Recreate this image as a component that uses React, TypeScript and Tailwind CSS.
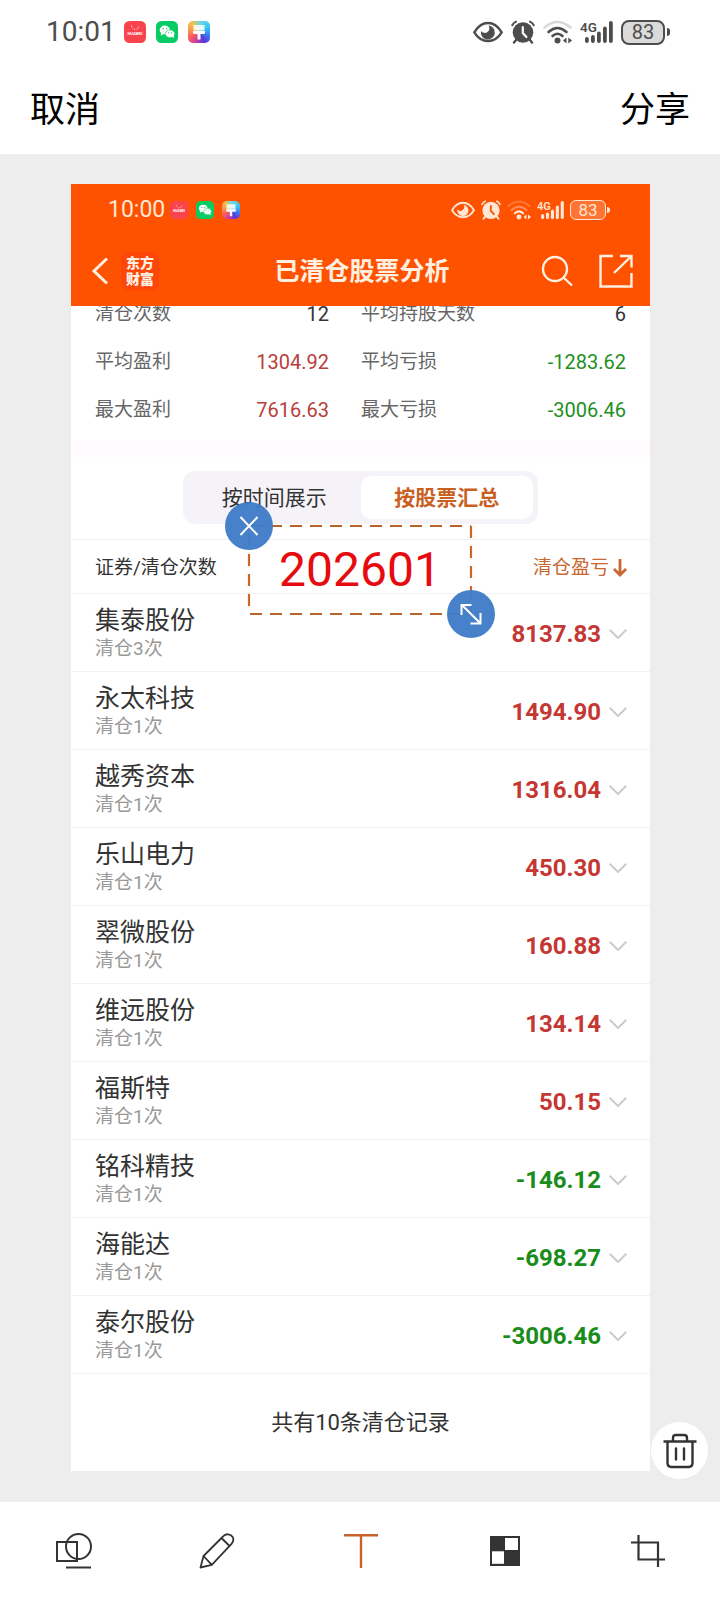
import React, { useState } from 'react';

interface Holding {
  name: string;
  count: number;
  profit: string;
}

const holdings: Holding[] = [
  { name: '集泰股份', count: 3, profit: '8137.83' },
  { name: '永太科技', count: 1, profit: '1494.90' },
  { name: '越秀资本', count: 1, profit: '1316.04' },
  { name: '乐山电力', count: 1, profit: '450.30' },
  { name: '翠微股份', count: 1, profit: '160.88' },
  { name: '维远股份', count: 1, profit: '134.14' },
  { name: '福斯特', count: 1, profit: '50.15' },
  { name: '铭科精技', count: 1, profit: '-146.12' },
  { name: '海能达', count: 1, profit: '-698.27' },
  { name: '泰尔股份', count: 1, profit: '-3006.46' }
];

const stats = [
  { label: '清仓次数', value: '12', color: 'text-[#333333]' },
  { label: '平均持股天数', value: '6', color: 'text-[#333333]' },
  { label: '平均盈利', value: '1304.92', color: 'text-[#b8403c]' },
  { label: '平均亏损', value: '-1283.62', color: 'text-[#238f23]' },
  { label: '最大盈利', value: '7616.63', color: 'text-[#b8403c]' },
  { label: '最大亏损', value: '-3006.46', color: 'text-[#238f23]' }
];

/* Status bar glyphs */
const EyeIcon = ({ className }: { className: string }) => (
  <svg viewBox="0 0 30 22" className={className} fill="none">
    <path d="M1.3 11.3C5 5 9.7 2 15 2s10 3 13.7 9.3C25 17.300 20.300 20 15 20S5 17.300 1.300 11.300Z" stroke="currentColor" strokeWidth="2.4" />
    <path d="M15.500 4.500A7 7 0 1 1 8 10A4 4 0 1 0 15.500 4.500Z" fill="currentColor" />
  </svg>
);

const AlarmIcon = ({ className, hand }: { className: string; hand: string }) => (
  <svg viewBox="0 0 24 24" className={className} fill="none" strokeLinecap="round">
    <circle cx="12" cy="12.5" r="10.3" fill="currentColor" />
    <path d="M1.2 5.2Q2.5 2.8 5 1.6M22.8 5.2Q21.5 2.8 19 1.6" stroke="currentColor" strokeWidth="2" />
    <path d="M5 20L3 22.5M19 20l2 2.5" stroke="currentColor" strokeWidth="2.4" />
    <path d="M11.8 7v6l3.6 4" stroke={hand} strokeWidth="2.2" />
  </svg>
);

const WifiIcon = ({ className, weak }: { className: string; weak: boolean }) => (
  <svg viewBox="0 0 29 24" className={className} fill="none" stroke="currentColor" strokeWidth="2.6" strokeLinecap="round">
    <path d="M1.5 7.500Q14.500-3.500 27.500 7.500" opacity="0.22" />
    <path d="M5.500 12Q14.500 4 23.500 12" opacity={weak ? 0.4 : 1} />
    <path d="M9.500 16Q14.500 11.500 19.500 16" />
    <circle cx="14.5" cy="20.5" r="3" fill="currentColor" stroke="none" />
    <path d="M20 20.500l3.500-3v6zM29 20.500l-3.700-3v6z" fill="currentColor" stroke="none" />
  </svg>
);

const SignalIcon = ({ className }: { className: string }) => (
  <svg viewBox="0 0 33 24" className={className} fill="currentColor">
    <text x="0" y="11.5" fontSize="13.5" fontWeight="600" className="font-['Roboto',sans-serif]">4G</text>
    <rect x="5" y="17" width="3.8" height="6" rx="1.9" />
    <rect x="11" y="15" width="3.8" height="8" rx="1.9" />
    <rect x="17" y="11.5" width="3.8" height="11.5" rx="1.9" />
    <rect x="23" y="6.5" width="3.8" height="16.5" rx="1.9" />
    <rect x="29" y="1" width="3.8" height="22" rx="1.9" />
  </svg>
);

const HuaweiIcon = ({ className }: { className: string }) => (
  <svg viewBox="0 0 22 22" className={className}>
    <rect width="22" height="22" rx="5.5" fill="#f8444c" />
    <path d="M7.5 4.500c.5 3 2 4 3.700 4s3.200-1 3.700-4" fill="none" stroke="#fff" strokeWidth="0.8" strokeDasharray="1.2 1.2" />
    <text x="11" y="14" textAnchor="middle" fontSize="4" fontWeight="700" fill="#fff" className="font-['Roboto',sans-serif]">HUAWEI</text>
  </svg>
);

const WechatIcon = ({ className }: { className: string }) => (
  <svg viewBox="0 0 22 22" className={className}>
    <rect width="22" height="22" rx="5.5" fill="#08cc63" />
    <ellipse cx="8.8" cy="9" rx="5.2" ry="4.4" fill="#fff" />
    <path d="M5.2 11.500l-.5 3 3-1.500z" fill="#fff" />
    <ellipse cx="14" cy="12.8" rx="4.7" ry="3.9" fill="#fff" stroke="#08cc63" strokeWidth="0.6" />
    <path d="M15.5 15.800l2.500 1.300-.4-2.600z" fill="#fff" />
    <g fill="#08cc63">
      <circle cx="7.2" cy="7.8" r="0.7" />
      <circle cx="10.6" cy="7.8" r="0.7" />
      <circle cx="12.5" cy="11.8" r="0.6" />
      <circle cx="15.6" cy="11.8" r="0.6" />
    </g>
  </svg>
);

const ThemeIcon = ({ className }: { className: string }) => (
  <div className={`${className} rounded-[5px] bg-[conic-gradient(from_0deg,#7fd4e8,#38c8f0_60deg,#3b7bf0_110deg,#5a35e0_150deg,#d0409a_200deg,#fb5a60_235deg,#f98a50_270deg,#f5c04c_320deg,#a8d08a_345deg,#7fd4e8)]`}>
    <svg viewBox="0 0 22 22" className="w-full" fill="#fff">
      <rect x="5.5" y="4" width="11" height="5.5" opacity="0.85" />
      <path d="M5 10h12v1.500q0 1.500-1.500 1.500H12.500v5.500h-3V13H6.500Q5 13 5 11.500z" />
    </svg>
  </div>
);

const ChevronDown = () => (
  <svg viewBox="0 0 18 10" className="h-[10px] w-[18px]" fill="none" stroke="#cccccc" strokeWidth="2">
    <path d="M.7.8L9 9l8.300-8.200" />
  </svg>
);

/* Status bar of the phone itself */
const PhoneStatus: React.FC = () => (
  <div className="flex h-16 items-center justify-between pr-[50px] pl-[46px] text-[#4d4d4d]">
    <div className="flex items-center gap-[10px]">
      <span className="mr-[-2px] text-[28px] leading-8">10:01</span>
      <HuaweiIcon className="size-[22px]" />
      <WechatIcon className="size-[22px]" />
      <ThemeIcon className="size-[22px]" />
    </div>
    <div className="flex items-center gap-2">
      <EyeIcon className="h-[22px] w-[30px]" />
      <AlarmIcon className="size-6" hand="#ffffff" />
      <WifiIcon className="h-6 w-[29px]" weak={false} />
      <SignalIcon className="h-6 w-[33px]" />
      <div className="flex items-center gap-[2px]">
        <div className="flex h-[25px] w-[44px] items-center justify-center rounded-[8px] border-2 border-current bg-[#dadada] text-xl leading-5">83</div>
        <div className="h-2 w-[3px] rounded-r-sm bg-current" />
      </div>
    </div>
  </div>
);

/* Status bar inside the screenshot being edited */
const ShotStatus: React.FC = () => (
  <div className="flex h-[52px] items-center justify-between pr-10 pl-[37px] text-[#ffe6d5]">
    <div className="flex items-center gap-2">
      <span className="mr-[-3px] text-[23px] leading-7">10:00</span>
      <HuaweiIcon className="size-[18px]" />
      <WechatIcon className="size-[18px]" />
      <ThemeIcon className="size-[18px]" />
    </div>
    <div className="flex items-center gap-[6px]">
      <EyeIcon className="h-[18px] w-6" />
      <AlarmIcon className="size-5" hand="#ff5200" />
      <WifiIcon className="h-5 w-6" weak />
      <SignalIcon className="h-5 w-[27px]" />
      <div className="flex items-center gap-[1px]">
        <div className="flex h-5 w-9 items-center justify-center rounded-[6px] border border-current bg-white/20 text-[17px] leading-4">83</div>
        <div className="h-[6px] w-[3px] rounded-r-sm bg-current" />
      </div>
    </div>
  </div>
);

/* Text sticker with its dashed frame and handles */
const TextSticker: React.FC = () => (
  <div className="absolute top-[342px] left-[178px] flex h-[88px] w-[222px] items-center justify-center">
    <svg className="absolute inset-0 h-full w-full overflow-visible" viewBox="0 0 222 88" stroke="#b8652c" strokeWidth="2.2" strokeDasharray="12 8" fill="none">
      <path d="M1 0H222M1 88H222" />
      <path d="M0 8V88M222 0V88" stroke="#cf632b" />
    </svg>
    <span className="text-[48px] leading-[56px] text-[#e60b0f]">202601</span>
    <button aria-label="关闭" className="absolute -top-6 -left-6 flex size-12 items-center justify-center rounded-full bg-[#3f7cc8]/96">
      <svg viewBox="0 0 20 20" className="size-5" stroke="#fff" strokeWidth="2">
        <path d="M1.500 1l17 18M18.500 1l-17 18" />
      </svg>
    </button>
    <button aria-label="缩放" className="absolute -right-6 -bottom-6 flex size-12 items-center justify-center rounded-full bg-[#3f7cc8]/96">
      <svg viewBox="0 0 22 22" className="size-[22px]" stroke="#fff" strokeWidth="2" fill="none">
        <path d="M1.500 12V2h10M2 2l18 18M20.500 10v10.500h-10" />
      </svg>
    </button>
  </div>
);

const Shot: React.FC = () => {
  const [tab, setTab] = useState<'time' | 'stock'>('stock');

  const tabClass = (active: boolean) =>
    active ? 'rounded-[10px] bg-white font-bold text-[#c8601f]' : 'text-[#333333]';

  return (
    <div className="relative bg-white">
      <div className="bg-[#ff5200] text-[#fff0e2]">
        <ShotStatus />
        <div className="grid h-[70px] grid-cols-[1fr_auto_1fr] items-center pr-[17px] pl-5">
          <div className="flex items-center gap-3">
            <button aria-label="返回">
              <svg viewBox="0 0 18 28" className="h-7 w-[18px]" fill="none" stroke="currentColor" strokeWidth="3">
                <path d="M16 1.500L3 14l13 12.500" />
              </svg>
            </button>
            <div className="flex size-[38px] flex-col items-center justify-center rounded-[8px] bg-[#fd4708] text-[14px] leading-4 font-black">
              <span>东方</span>
              <span>财富</span>
            </div>
          </div>
          <h1 className="pt-[2px] text-[25px] leading-8 font-bold">已清仓股票分析</h1>
          <div className="flex items-center justify-end gap-[26px]">
            <button aria-label="搜索">
              <svg viewBox="0 0 32 32" className="size-8" fill="none" stroke="currentColor" strokeWidth="2.4">
                <circle cx="14" cy="14" r="12" />
                <path d="M22.500 22.500l8.500 8" />
              </svg>
            </button>
            <button aria-label="分享截图">
              <svg viewBox="0 0 34 34" className="size-[34px]" fill="none" stroke="currentColor" strokeWidth="2.4">
                <path d="M14 2H1.500v30.500h31V19M21 2h11.500v11.500M32 2.500L15 19" />
              </svg>
            </button>
          </div>
        </div>
      </div>

      {/* Summary, scrolled partly under the header */}
      <div className="overflow-hidden pb-[6px]">
        <dl className="-mt-4 grid grid-cols-[233fr_264fr] gap-x-8 px-6">
          {stats.map(s => (
            <div key={s.label} className="flex h-12 items-center justify-between">
              <dt className="text-[19px] leading-6 text-[#666666]">{s.label}</dt>
              <dd className={`text-xl leading-6 ${s.color}`}>{s.value}</dd>
            </div>
          ))}
        </dl>
      </div>
      <div className="h-[17px] bg-[#fffbff]" />

      <div className="px-[112px] pt-[14px] pb-[15px]">
        <div className="grid h-[53px] grid-cols-2 rounded-xl bg-[#f6f3f8] p-[5px] text-[21px] leading-6">
          <button onClick={() => setTab('time')} className={tabClass(tab === 'time')}>按时间展示</button>
          <button onClick={() => setTab('stock')} className={tabClass(tab === 'stock')}>按股票汇总</button>
        </div>
      </div>

      <table className="w-full border-collapse">
        <thead>
          <tr className="h-[54px] border-y border-[#f2f2f2] text-[19px] leading-6">
            <th className="pt-[2px] pl-6 text-left font-normal text-[#333333]">证券/清仓次数</th>
            <th className="pt-[2px] pr-[23px] font-normal text-[#c8672f]">
              <button className="ml-auto flex items-center gap-1">
                清仓盈亏
                <svg viewBox="0 0 14 20" className="h-5 w-[14px]" fill="none" stroke="currentColor" strokeWidth="2.8">
                  <path d="M7 1v16M1 11l6 6 6-6" />
                </svg>
              </button>
            </th>
          </tr>
        </thead>
        <tbody>
          {holdings.map(h => (
            <tr key={h.name} className="h-[78px] border-b border-[#f2f2f2]">
              <td className="pt-1 pl-6">
                <div className="text-[25px] leading-7 text-[#333333]">{h.name}</div>
                <div className="text-[19px] leading-7 text-[#999999]">清仓{h.count}次</div>
              </td>
              <td className="pt-[2px] pr-[23px]">
                <div className="flex items-center justify-end gap-2">
                  <span className={`text-2xl leading-7 font-bold ${h.profit.startsWith('-') ? 'text-[#1a8c1a]' : 'text-[#c43733]'}`}>{h.profit}</span>
                  <button aria-label="展开"><ChevronDown /></button>
                </div>
              </td>
            </tr>
          ))}
        </tbody>
      </table>
      <p className="py-9 text-center text-[22px] leading-[25px] text-[#333333]">共有10条清仓记录</p>

      <TextSticker />
    </div>
  );
};

const tools = [
  {
    label: '形状',
    icon: (
      <svg viewBox="0 0 36 36" className="size-9" fill="none" stroke="currentColor" strokeWidth="2">
        <path d="M1 9h20v19H1z" />
        <circle cx="22.5" cy="13.5" r="12.5" />
        <path d="M10 34.500h25" />
      </svg>
    )
  },
  {
    label: '画笔',
    icon: (
      <svg viewBox="0 0 36 36" className="size-9" fill="none" stroke="currentColor" strokeWidth="1.8" strokeLinejoin="round">
        <path d="M1.500 34.500L4.500 23 23.500 4C27-.3 32 1 33.800 4.200c1 2.300.6 4.600-1.300 6.700L12.800 31.800zM4.500 23l8.300 8.800M22.500 5l8 8" />
      </svg>
    )
  },
  {
    label: '文字',
    icon: (
      <svg viewBox="0 0 36 36" className="size-9 text-[#c9622c]" fill="none" stroke="currentColor" strokeWidth="2.4">
        <path d="M1 2.200h34M18 2v33" />
      </svg>
    )
  },
  {
    label: '马赛克',
    icon: (
      <svg viewBox="0 0 30 30" className="size-[30px]">
        <rect width="30" height="30" fill="currentColor" />
        <rect x="15" y="2" width="13" height="12" fill="#fff" />
        <rect x="2" y="15.3" width="12" height="12.5" fill="#fff" />
      </svg>
    )
  },
  {
    label: '裁剪',
    icon: (
      <svg viewBox="0 0 34 34" className="size-[34px]" fill="none" stroke="currentColor" strokeWidth="2.2">
        <path d="M0 8.500h27v24.500M7.500 1v24.500H34" />
      </svg>
    )
  }
];

const App: React.FC = () => (
  <div className="flex min-h-screen flex-col bg-white font-['Roboto','Noto_Sans_CJK_SC',sans-serif]">
    <header>
      <PhoneStatus />
      <div className="flex h-[90px] items-center justify-between px-[30px] pt-1 text-[35px] leading-10 text-black">
        <button>取消</button>
        <button>分享</button>
      </div>
    </header>

    <main className="relative grow bg-[#ededed] pt-[30px] pr-[70px] pb-[31px] pl-[71px]">
      <Shot />
      <button aria-label="删除" className="absolute right-3 bottom-[23px] flex size-[57px] items-center justify-center rounded-full bg-white text-[#333333]">
        <svg viewBox="0 0 34 36" className="h-9 w-[34px]" fill="none" stroke="currentColor" strokeWidth="2.4">
          <path d="M.5 8.500h33M10 8V5q0-3 3-3h8q3 0 3 3v3M4.500 9v21q0 4 4 4h17q4 0 4-4V9" />
          <path d="M13 15.500v11M21 15.500v11" strokeLinecap="round" />
        </svg>
      </button>
    </main>

    <nav className="grid h-[98px] grid-cols-5 items-center pl-[2px] text-[#333333]">
      {tools.map(t => (
        <button key={t.label} aria-label={t.label} className="flex justify-center">{t.icon}</button>
      ))}
    </nav>
  </div>
);

export default App;
